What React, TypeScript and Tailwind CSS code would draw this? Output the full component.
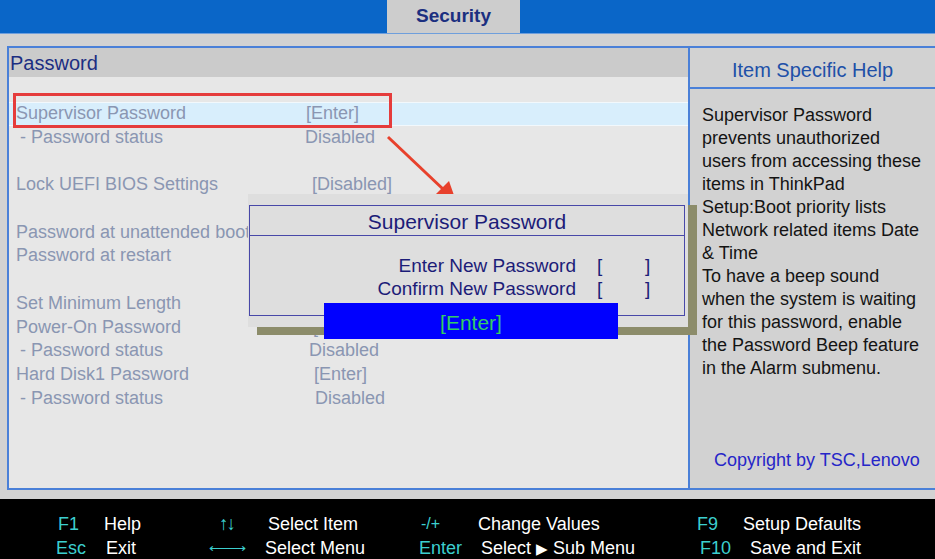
import { FC } from "react";

type Row = { label: string; value?: string; w?: string; indent?: boolean };

// left list, one entry per 23.7px line (blank entries keep the gaps)
const rows: (Row | null)[] = [
  { label: "Supervisor Password", value: "[Enter]", w: "w-[297px]" },
  { label: "- Password status", value: "Disabled", w: "w-[296px]", indent: true },
  null,
  { label: "Lock UEFI BIOS Settings", value: "[Disabled]", w: "w-[303px]" },
  null,
  { label: "Password at unattended boot" },
  { label: "Password at restart" },
  null,
  { label: "Set Minimum Length" },
  { label: "Power-On Password", value: "[Enter]", w: "w-[304px]" },
  { label: "- Password status", value: "Disabled", w: "w-[300px]", indent: true },
  { label: "Hard Disk1 Password", value: "[Enter]", w: "w-[305px]" },
  { label: "- Password status", value: "Disabled", w: "w-[306px]", indent: true },
];

const helpLines = [
  "Supervisor Password",
  "prevents unauthorized",
  "users from accessing these",
  "items in ThinkPad",
  "Setup:Boot priority lists",
  "Network related items Date",
  "& Time",
  "To have a beep sound",
  "when the system is waiting",
  "for this password, enable",
  "the Password Beep feature",
  "in the Alarm submenu.",
];

const App: FC = () => {
  return (
    <div className="relative w-[935px] h-[559px] overflow-hidden bg-[#d2d2d2] font-['Liberation_Sans',Arial,sans-serif]">
      {/* top menu bar */}
      <div className="h-[34px] bg-[#0a66c8] flex border-b border-[#6f9fdc]">
        <div className="ml-[387px] w-[133px] h-full bg-[#cdcdcd] flex items-center justify-center text-[19px] font-bold text-[#1b2f80]">
          Security
        </div>
      </div>

      {/* panels */}
      <div className="h-[465px] pt-[12px] pl-[7px] flex">
        <div className="w-[681px] h-[444px] border-l-2 border-t-2 border-b-2 border-[#4a80d8] flex flex-col">
          <div className="h-[29px] bg-[#cbcbcb] pl-[1px] flex items-center text-[20px] text-[#1c2e82]">
            Password
          </div>
          <div className="flex-1 bg-[#e7e7e7] pt-[25px]">
            {rows.map((r, i) =>
              r ? (
                <div
                  key={i}
                  className={`h-[23.7px] flex items-center text-[18px] text-[#8a96b2] whitespace-nowrap ${
                    i === 0 ? "bg-[#d8eefc] border-y border-[#f2f8fc]" : ""
                  }`}
                >
                  <span className={`${r.indent ? "pl-[11px]" : "pl-[7px]"} ${r.w ?? ""}`}>{r.label}</span>
                  {r.value && <span>{r.value}</span>}
                </div>
              ) : (
                <div key={i} className="h-[23.7px]" />
              )
            )}
          </div>
        </div>

        <div className="flex-1 h-[444px] border-l-2 border-t-2 border-b-2 border-[#4a80d8] flex flex-col">
          <div className="h-[41px] border-b-2 border-[#4a80d8] flex items-center justify-center text-[20px] text-[#2050a8] pt-[4px]">
            Item Specific Help
          </div>
          <div className="flex-1 flex flex-col pl-[12px] pt-[15px] pb-[16px] text-[18px] leading-[23px] text-[#141414]">
            {helpLines.map((l) => (
              <div key={l} className="whitespace-nowrap">
                {l}
              </div>
            ))}
            <div className="mt-auto pl-[12px] text-[#2626c8] whitespace-nowrap">Copyright by TSC,Lenovo</div>
          </div>
        </div>
      </div>

      {/* key legend */}
      <div className="h-[60px] bg-black pt-[13px] text-[18px] leading-[24px] text-white whitespace-nowrap">
        <div className="flex pl-[58px]">
          <span className="w-[46px] text-[#3ccfcf]">F1</span>
          <span className="w-[111px]">Help</span>
          <span className="w-[53px] pl-[4px] text-[#3ccfcf] text-[19px] tracking-[-2px]">↑↓</span>
          <span className="w-[153px]">Select Item</span>
          <span className="w-[57px] text-[#3ccfcf] text-[16px]">-/+</span>
          <span className="w-[219px]">Change Values</span>
          <span className="w-[46px] text-[#3ccfcf]">F9</span>
          <span>Setup Defaults</span>
        </div>
        <div className="flex pl-[56px]">
          <span className="w-[50px] text-[#3ccfcf]">Esc</span>
          <span className="w-[103px]">Exit</span>
          <span className="w-[56px] text-[#3ccfcf] text-[14px] tracking-[-3px]">⟵⟶</span>
          <span className="w-[154px]">Select Menu</span>
          <span className="w-[62px] text-[#3ccfcf]">Enter</span>
          <span className="w-[219px]">
            Select <span className="text-[15px]">▶</span> Sub Menu
          </span>
          <span className="w-[50px] text-[#3ccfcf]">F10</span>
          <span>Save and Exit</span>
        </div>
      </div>

      {/* red highlight box and arrow */}
      <div className="absolute left-[13px] top-[93px] w-[379px] h-[35px] border-[3px] border-[#e53c3c]" />
      <svg className="absolute left-0 top-0" width="935" height="559">
        <line x1="388" y1="137" x2="444" y2="190" stroke="#e8412c" strokeWidth="3" />
        <polygon points="456,201 436,194 449,181" fill="#e8412c" />
      </svg>

      {/* password dialog */}
      <div className="absolute left-[257px] top-[205px] w-[440px] h-[130px] bg-[#8c8c6a]" />
      <div className="absolute left-[248px] top-[194px] w-[440px] h-[133px] bg-[#dedede] pt-[11px] pl-[1px]">
        <div className="w-[436px] h-[111px] border border-[#4848a8] flex flex-col text-[#1c1c78]">
          <div className="h-[30px] pt-[2px] border-b border-[#4848a8] flex items-center justify-center text-[21px]">
            Supervisor Password
          </div>
          <div className="pt-[18px] text-[19px] leading-[23px]">
            <div className="flex">
              <span className="w-[326px] text-right">Enter New Password</span>
              <span className="ml-[21px] w-[48px]">[</span>
              <span>]</span>
            </div>
            <div className="flex">
              <span className="w-[326px] text-right">Confirm New Password</span>
              <span className="ml-[21px] w-[48px]">[</span>
              <span>]</span>
            </div>
          </div>
        </div>
      </div>
      <div className="absolute left-[324px] top-[303px] w-[294px] h-[36px] pt-[3px] bg-[#0000ff] flex items-center justify-center text-[21px] text-[#33cc66]">
        [Enter]
      </div>
    </div>
  );
};

export default App;
